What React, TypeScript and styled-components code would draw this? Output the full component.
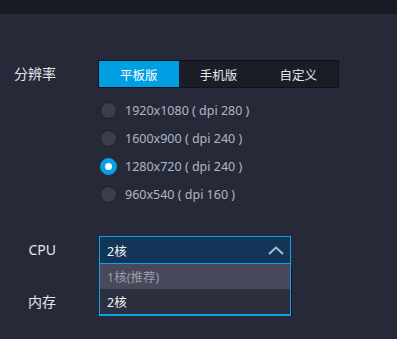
import React, {FC} from 'react';
import styled, {createGlobalStyle} from 'styled-components';

const Global = createGlobalStyle`
body{
    margin:0;
    background:#262a38;
    font-family:"Noto Sans","Noto Sans CJK SC",sans-serif;
}
`
const TopBar = styled.div`
height:14px;
background:#181b24;
`
const Content = styled.div`
padding-top:46px;
`
const Row = styled.div<{mt?: number}>`
display:grid;
grid-template-columns:56px 1fr;
column-gap:42px;
align-items:center;
margin-top:${p => p.mt || 0}px;
`
const Label = styled.div`
text-align:right;
font-size:14px;
color:#e4e6ec;
line-height:28px;
`
const Tabs = styled.div`
display:flex;
width:239px;
height:26px;
border:1px solid #111318;
background:#1b1d26;
`
const Tab = styled.div<{active?: boolean}>`
flex:1;
display:flex;
align-items:center;
justify-content:center;
font-size:12.5px;
color:${p => p.active ? '#ffffff' : '#e4e6ec'};
background:${p => p.active ? '#009fe3' : 'transparent'};
`
const Radios = styled.div`
margin-top:8px;
padding-left:100px;
`
const RadioRow = styled.div`
display:flex;
align-items:center;
height:28px;
font-size:12.5px;
color:#b2b6c2;
`
const Dot = styled.span<{checked?: boolean}>`
width:17px;
height:17px;
border-radius:50%;
margin-right:8px;
box-sizing:border-box;
border:1px solid ${p => p.checked ? '#0a9ee6' : '#1e2029'};
background:${p => p.checked ? '#0a9ee6' : '#3a3d4b'};
display:flex;
align-items:center;
justify-content:center;
&::after{
    content:'';
    display:${p => p.checked ? 'block' : 'none'};
    width:7px;
    height:7px;
    border-radius:50%;
    background:#fff;
}
`
const SelectWrap = styled.div`
position:relative;
width:192px;
margin-left:1px;
`
const Select = styled.div`
height:28px;
box-sizing:border-box;
border:1px solid #0aa3ec;
background:#133558;
display:flex;
align-items:center;
justify-content:space-between;
padding:0 6px 0 7px;
font-size:12.5px;
color:#f2f4f8;
`
const Menu = styled.div`
position:absolute;
left:0;
right:0;
top:28px;
box-sizing:border-box;
border:1px solid #0aa3ec;
border-top:none;
border-bottom-width:2px;
box-shadow:1px 2px 1px rgba(0,0,0,0.45);
z-index:2;
`
const Item = styled.div<{muted?: boolean}>`
height:25px;
display:flex;
align-items:center;
padding-left:7px;
font-size:12.5px;
color:${p => p.muted ? '#9a9dab' : '#f0f2f6'};
background:${p => p.muted ? '#464a5a' : '#2c2f3e'};
`

const Chevron: FC = () => (
    <svg width="16" height="9" viewBox="0 0 16 9">
        <polyline points="1,8 8,1.5 15,8" fill="none" stroke="#aebcd2" strokeWidth="2"/>
    </svg>
);

const resolutions = [
    {text: '1920x1080 ( dpi 280 )'},
    {text: '1600x900 ( dpi 240 )'},
    {text: '1280x720 ( dpi 240 )', checked: true},
    {text: '960x540 ( dpi 160 )'},
];

export default function App() {
    return (
        <>
            <Global/>
            <TopBar/>
            <Content>
                <Row>
                    <Label>分辨率</Label>
                    <Tabs>
                        <Tab active>平板版</Tab>
                        <Tab>手机版</Tab>
                        <Tab>自定义</Tab>
                    </Tabs>
                </Row>
                <Radios>
                    {resolutions.map(r => (
                        <RadioRow key={r.text}>
                            <Dot checked={r.checked}/>
                            {r.text}
                        </RadioRow>
                    ))}
                </Radios>
                <Row mt={28}>
                    <Label>CPU</Label>
                    <SelectWrap>
                        <Select>
                            <span>2核</span>
                            <Chevron/>
                        </Select>
                        <Menu>
                            <Item muted>1核(推荐)</Item>
                            <Item>2核</Item>
                        </Menu>
                    </SelectWrap>
                </Row>
                <Row mt={24}>
                    <Label>内存</Label>
                    <div/>
                </Row>
            </Content>
        </>
    );
}
